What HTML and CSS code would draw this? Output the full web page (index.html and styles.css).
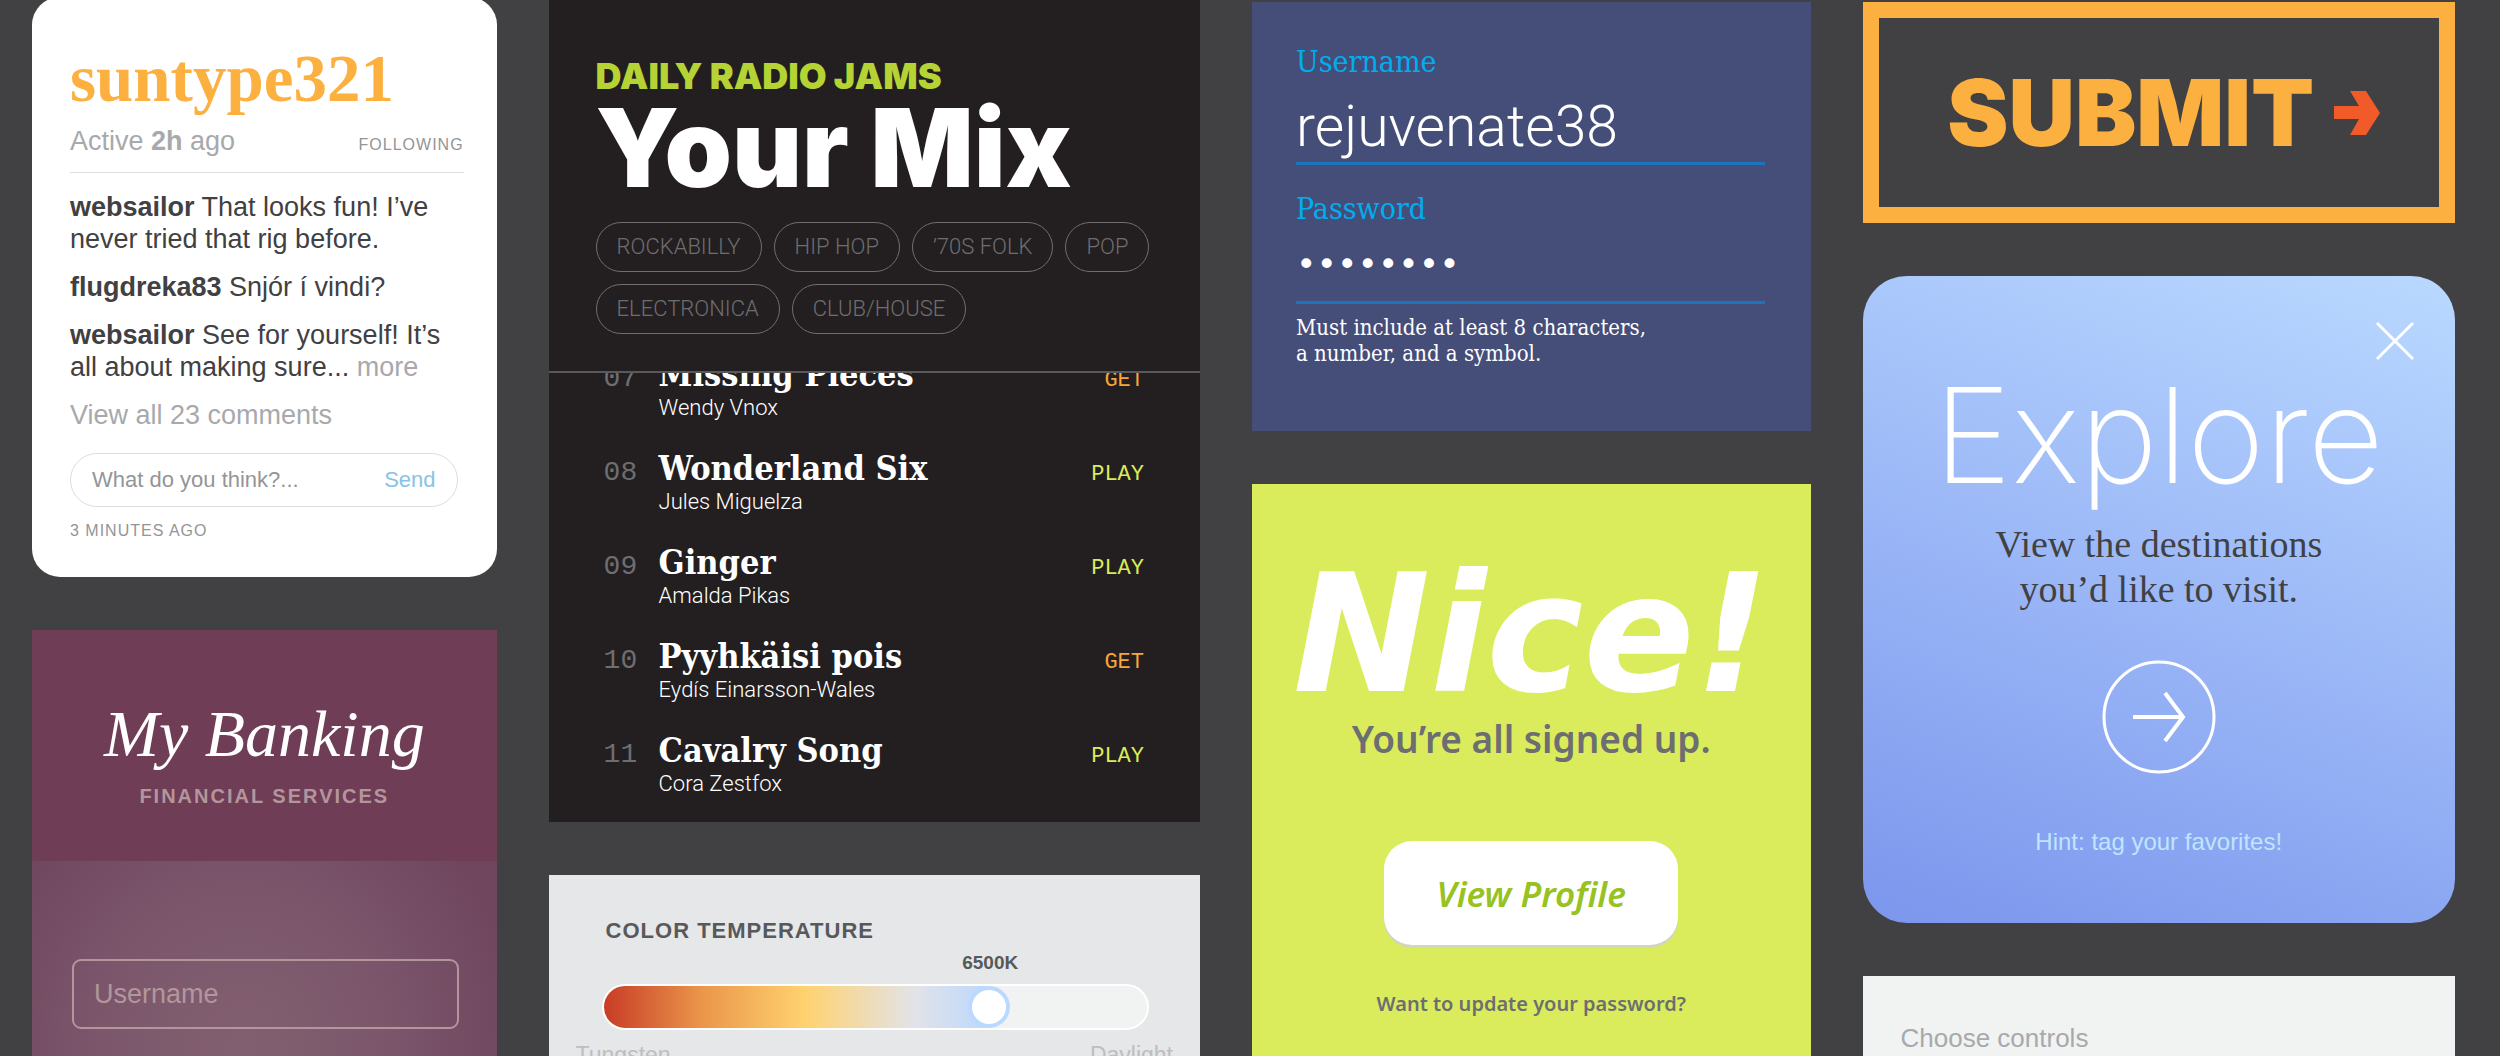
FILE: index.html
```html
<!DOCTYPE html>
<html lang="en">
<head>
  <meta charset="UTF-8">
  <meta name="viewport" content="width=device-width, initial-scale=1">
  <title>UI Type Samples</title>
  <link rel="stylesheet" href="styles.css">
</head>
<body>
  <main class="board">

    <div class="column column-social">
      <section class="card comments">
        <h2 class="comments-name">suntype321</h2>
        <div class="comments-status">
          <span>Active <b>2h</b> ago</span>
          <span class="small-caps">FOLLOWING</span>
        </div>
        <p><b>websailor</b> That looks fun! I’ve<br>never tried that rig before.</p>
        <p><b>flugdreka83</b> Snjór í vindi?</p>
        <p><b>websailor</b> See for yourself! It’s<br>all about making sure... <a href="#">more</a></p>
        <p><a href="#">View all 23 comments</a></p>
        <form class="reply">
          <input type="text" placeholder="What do you think?..." aria-label="Comment">
          <button type="button">Send</button>
        </form>
        <div class="small-caps">3 MINUTES AGO</div>
      </section>

      <section class="banking">
        <header class="banking-header">
          <h2>My Banking</h2>
          <div class="banking-tagline">FINANCIAL SERVICES</div>
        </header>
        <form class="banking-form">
          <input type="text" placeholder="Username" aria-label="Username">
        </form>
      </section>
    </div>

    <div class="column">
      <section class="radio">
        <header class="radio-header">
          <div class="radio-kicker">DAILY RADIO JAMS</div>
          <h2>Your Mix</h2>
          <div class="tags">
            <a href="#">ROCKABILLY</a>
            <a href="#">HIP HOP</a>
            <a href="#">’70S FOLK</a>
            <a href="#">POP</a>
            <a href="#">ELECTRONICA</a>
            <a href="#">CLUB/HOUSE</a>
          </div>
        </header>
        <div class="tracks">
          <ul>
            <li><span class="num">07</span><div><h3>Missing Pieces</h3><span class="artist">Wendy Vnox</span></div><button class="get">GET</button></li>
            <li><span class="num">08</span><div><h3>Wonderland Six</h3><span class="artist">Jules Miguelza</span></div><button>PLAY</button></li>
            <li><span class="num">09</span><div><h3>Ginger</h3><span class="artist">Amalda Pikas</span></div><button>PLAY</button></li>
            <li><span class="num">10</span><div><h3>Pyyhkäisi pois</h3><span class="artist">Eydís Einarsson-Wales</span></div><button class="get">GET</button></li>
            <li><span class="num">11</span><div><h3>Cavalry Song</h3><span class="artist">Cora Zestfox</span></div><button>PLAY</button></li>
          </ul>
        </div>
      </section>

      <section class="temperature">
        <label for="kelvin">COLOR TEMPERATURE</label>
        <div class="temperature-slider">
          <div class="temperature-value"><output for="kelvin" style="left: 71%">6500K</output></div>
          <input type="range" id="kelvin" min="2000" max="8200" step="100" value="6500">
        </div>
        <div class="temperature-ends"><span>Tungsten</span><span>Daylight</span></div>
      </section>
    </div>

    <div class="column column-low">
      <form class="signup">
        <label for="user">Username</label>
        <input type="text" id="user" value="rejuvenate38">
        <label for="pass">Password</label>
        <input type="password" id="pass" value="password">
        <p>Must include at least 8 characters,<br>a number, and a symbol.</p>
      </form>

      <section class="nice">
        <h2>Nice!</h2>
        <p>You’re all signed up.</p>
        <button>View Profile</button>
        <a href="#">Want to update your password?</a>
      </section>
    </div>

    <div class="column column-low">
      <button class="submit">
        SUBMIT
        <svg viewBox="0 0 46 44" width="46" height="44" aria-hidden="true">
          <path d="M16 0H32L46 22L32 44H16L25 28H0V15H25Z" fill="#f15a29"/>
        </svg>
      </button>

      <section class="explore">
        <button class="explore-close" aria-label="Close">
          <svg viewBox="0 0 40 40" width="40" height="40">
            <path d="M2 2L38 38M38 2L2 38" stroke="#fff" stroke-width="3"/>
          </svg>
        </button>
        <h2>Explore</h2>
        <p>View the destinations<br>you’d like to visit.</p>
        <button class="explore-go" aria-label="Go">
          <svg viewBox="0 0 114 114" width="114" height="114">
            <circle cx="57" cy="57" r="55" fill="none" stroke="#fff" stroke-width="3"/>
            <path d="M31 57H81M63 33L81 57L63 81" fill="none" stroke="#fff" stroke-width="4"/>
          </svg>
        </button>
        <div class="explore-hint">Hint: tag your favorites!</div>
      </section>

      <section class="controls">Choose controls</section>
    </div>

  </main>
</body>
</html>
```
FILE: styles.css
```css
* {
  box-sizing: border-box;
}
body {
  margin: 0;
  height: 100vh;
  overflow: hidden;
  background-color: #414042;
  color: #414042;
  font-family: "Liberation Sans", Arial, sans-serif;
}
h2, h3, p, ul {
  margin: 0;
  padding: 0;
}
a {
  text-decoration: none;
}
input, button {
  font-family: inherit;
  border: none;
  background: none;
  padding: 0;
  margin: 0;
  outline: none;
}
button {
  cursor: pointer;
}
svg {
  display: block;
}
.board {
  display: grid;
  grid-template-columns: 465fr 652fr 559fr 593fr;
  gap: 52px;
  height: 100%;
  padding: 0 45px 0 32px;
}
.column {
  display: flex;
  flex-direction: column;
  gap: 53px;
  min-width: 0;
}
.column > * {
  flex-shrink: 0;
}
.column > :last-child {
  flex-grow: 1;
}
.column-low {
  padding-top: 2px;
}
.column-social {
  margin-top: -3px;
}

/* comments */
.comments {
  background-color: #fff;
  border-radius: 28px;
  padding: 45px 33px 36px 38px;
}
.comments-name {
  font: bold 67px/72px "Liberation Serif", serif;
  color: #fbb040;
}
.comments-status {
  display: flex;
  justify-content: space-between;
  align-items: baseline;
  margin: 11px 0 18px;
  padding-bottom: 15px;
  border-bottom: 1px solid #dcddde;
  font-size: 27px;
  line-height: 32px;
  color: #a7a9ac;
}
.small-caps {
  font-size: 16px;
  line-height: 20px;
  letter-spacing: 1px;
  color: #939598;
}
.comments p {
  font-size: 27px;
  line-height: 32px;
  margin-bottom: 16px;
  white-space: nowrap;
}
.comments a {
  color: #a7a9ac;
}
.reply {
  display: flex;
  align-items: center;
  height: 54px;
  margin: 22px 6px 14px 0;
  padding: 0 21px;
  border: 1px solid #dcddde;
  border-radius: 27px;
}
.reply input {
  flex: 1;
  min-width: 0;
  font-size: 22px;
}
.reply input::placeholder {
  color: #939598;
}
.reply button {
  font-size: 22px;
  color: #88c3e6;
}

/* banking */
.banking {
  display: flex;
  flex-direction: column;
  background-color: #703d57;
  color: #b3969b;
}
.banking-header {
  padding: 64px 20px 53px;
  text-align: center;
}
.banking-header h2 {
  font: italic 66px/80px "Liberation Serif", serif;
  color: #fff;
}
.banking-tagline {
  margin-top: 10px;
  font-size: 20px;
  line-height: 24px;
  font-weight: bold;
  letter-spacing: 2px;
}
.banking-form {
  flex: 1;
  padding: 98px 38px 27px 40px;
  background: radial-gradient(ellipse 280px 300px at 45% 90%, #825f70, #7c576c 50%, #6f465e);
}
.banking-form input {
  width: 100%;
  height: 70px;
  padding: 0 20px;
  border: 2px solid #b3969b;
  border-radius: 9px;
  font-size: 27px;
}
.banking-form input::placeholder {
  color: #b3969b;
}

/* radio */
.radio {
  background-color: #231f20;
  color: #fff;
}
.radio-header {
  padding: 56px 47px 37px;
  border-bottom: 2px solid #58595b;
}
.radio-kicker {
  font: 900 36px/40px Inter, sans-serif;
  color: #b5d334;
}
.radio-header h2 {
  font: 900 108px/104px Inter, sans-serif;
}
.tags {
  display: flex;
  flex-wrap: wrap;
  gap: 12px;
  margin: 22px -10px 0 0;
}
.tags a {
  padding: 0 20px;
  border: 1px solid #6d6e71;
  border-radius: 25px;
  font: 300 22px/48px Roboto, sans-serif;
  color: #6d6e71;
}
.tracks {
  overflow: hidden;
  padding: 0 56px 24px 55px;
}
.tracks ul {
  list-style: none;
  margin-top: -19px;
}
.tracks li {
  display: grid;
  grid-template-columns: 55px 1fr auto;
  align-items: baseline;
}
.tracks li + li {
  margin-top: 26px;
}
.num {
  font: 28px/40px "Liberation Mono", monospace;
  color: #6d6e71;
}
.tracks h3 {
  font: bold 34px/40px "DejaVu Serif Condensed", "DejaVu Serif", serif;
}
.artist {
  display: block;
  font: 300 22px/28px Roboto, sans-serif;
}
.tracks button {
  font: 22px/40px "Liberation Mono", monospace;
  color: #d9ec59;
}
.tracks .get {
  color: #f7a63a;
}

/* color temperature */
.temperature {
  padding: 42px 27px 0;
  background-color: #e6e7e8;
  color: #58595b;
}
.temperature label {
  display: block;
  padding-left: 30px;
  font-size: 22px;
  line-height: 28px;
  font-weight: bold;
  letter-spacing: 1px;
}
.temperature-slider {
  padding: 6px 24px 10px 26px;
}
.temperature-value {
  position: relative;
  height: 33px;
}
.temperature-value output {
  position: absolute;
  transform: translateX(-50%);
  font-size: 19px;
  line-height: 24px;
  font-weight: bold;
}
.temperature input {
  -webkit-appearance: none;
  appearance: none;
  display: block;
  width: 100%;
  height: 46px;
  border: 2px solid #fff;
  border-radius: 23px;
  background: linear-gradient(to right, #c83c26, #ea964a 18%, #ffd26f 37%, #e2e3e8 57%, #bbd8ff 71%, #f1f2f2 71%);
}
.temperature input::-webkit-slider-thumb {
  -webkit-appearance: none;
  width: 42px;
  height: 42px;
  border: 4px solid #bbd8ff;
  border-radius: 50%;
  background-color: #fff;
}
.temperature-ends {
  display: flex;
  justify-content: space-between;
  font-size: 23px;
  line-height: 30px;
  color: #bcbec0;
}

/* sign up form */
.signup {
  padding: 43px 46px 64px 44px;
  background-color: #454d79;
  font-family: "DejaVu Serif Condensed", "DejaVu Serif", serif;
}
.signup label {
  display: block;
  font-size: 30px;
  line-height: 34px;
  color: #00aeef;
}
.signup input {
  display: block;
  width: 100%;
  border-bottom: 3px solid #1c75bc;
  color: #fff;
}
.signup input[type="text"] {
  height: 86px;
  padding-top: 12px;
  margin-bottom: 27px;
  font: 300 57px/70px Roboto, sans-serif;
}
.signup input[type="password"] {
  height: 78px;
  font: 34px/70px "DejaVu Sans Mono", monospace;
}
.signup p {
  margin-top: 11px;
  font-size: 22px;
  line-height: 26px;
  color: #fff;
}

/* confirmation */
.nice {
  display: flex;
  flex-direction: column;
  align-items: center;
  padding-top: 71px;
  background-color: #daec5c;
  color: #6d6e71;
  font-family: "Noto Sans", sans-serif;
  font-weight: 600;
}
.nice h2 {
  font: italic bold 164px/160px "DejaVu Sans", sans-serif;
  color: #fff;
}
.nice p {
  font-size: 37px;
  line-height: 48px;
}
.nice button {
  width: 294px;
  height: 104px;
  margin: 78px 0 45px;
  border-radius: 28px;
  background-color: #fff;
  box-shadow: 0 3px 0 #d3d6bb;
  font-size: 35px;
  font-style: italic;
  font-weight: 600;
  color: #97c221;
}
.nice a {
  font-size: 20px;
  line-height: 28px;
  color: inherit;
}

/* submit */
.submit {
  display: flex;
  justify-content: center;
  align-items: center;
  gap: 20px;
  height: 221px;
  padding-left: 10px;
  border: 16px solid #fbb040;
  font: 900 92px/100px Inter, sans-serif;
  color: #fbb040;
}

/* explore */
.explore {
  position: relative;
  display: flex;
  flex-direction: column;
  align-items: center;
  padding: 84px 20px 66px;
  border-radius: 44px;
  background: linear-gradient(20deg, #7b96ec, #98b4f6 45%, #b9d9ff);
  text-align: center;
}
.explore-close {
  position: absolute;
  top: 45px;
  right: 40px;
}
.explore h2 {
  font: 200 132px/150px Inter, sans-serif;
  color: #fff;
}
.explore p {
  margin: 12px 0 48px;
  font: 38px/45px "Liberation Serif", serif;
}
.explore-hint {
  margin-top: 53px;
  font-size: 24px;
  line-height: 30px;
  color: #bfe5ff;
}

/* controls */
.controls {
  padding: 46px 38px 0;
  background-color: #f1f2f2;
  font-size: 26px;
  line-height: 32px;
  color: #a7a9ac;
}
```
